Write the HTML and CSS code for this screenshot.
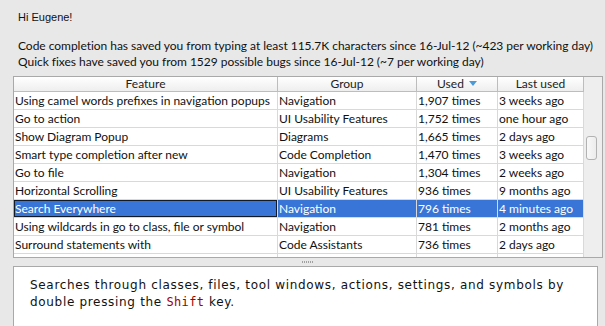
FILE: index.html
```html
<!DOCTYPE html>
<html>
<head>
<meta charset="utf-8">
<link rel="stylesheet" href="styles.css">
</head>
<body>
<div class="page">
  <p class="greeting">Hi Eugene!</p>
  <div class="stats">
    <p>Code completion has saved you from typing at least 115.7K characters since 16-Jul-12 (~423 per working day)</p>
    <p>Quick fixes have saved you from 1529 possible bugs since 16-Jul-12 (~7 per working day)</p>
  </div>
  <div class="table">
    <div class="grid">
      <div class="row head">
        <div class="cell">Feature</div>
        <div class="cell">Group</div>
        <div class="cell">Used <span class="sort"></span></div>
        <div class="cell">Last used</div>
      </div>
      <div class="row"><div class="cell">Using camel words prefixes in navigation popups</div><div class="cell">Navigation</div><div class="cell">1,907 times</div><div class="cell">3 weeks ago</div></div>
      <div class="row"><div class="cell">Go to action</div><div class="cell">UI Usability Features</div><div class="cell">1,752 times</div><div class="cell">one hour ago</div></div>
      <div class="row"><div class="cell">Show Diagram Popup</div><div class="cell">Diagrams</div><div class="cell">1,665 times</div><div class="cell">2 days ago</div></div>
      <div class="row"><div class="cell">Smart type completion after new</div><div class="cell">Code Completion</div><div class="cell">1,470 times</div><div class="cell">3 weeks ago</div></div>
      <div class="row"><div class="cell">Go to file</div><div class="cell">Navigation</div><div class="cell">1,304 times</div><div class="cell">2 weeks ago</div></div>
      <div class="row"><div class="cell">Horizontal Scrolling</div><div class="cell">UI Usability Features</div><div class="cell">936 times</div><div class="cell">9 months ago</div></div>
      <div class="row selected"><div class="cell focus">Search Everywhere</div><div class="cell">Navigation</div><div class="cell">796 times</div><div class="cell">4 minutes ago</div></div>
      <div class="row"><div class="cell">Using wildcards in go to class, file or symbol</div><div class="cell">Navigation</div><div class="cell">781 times</div><div class="cell">2 months ago</div></div>
      <div class="row"><div class="cell">Surround statements with</div><div class="cell">Code Assistants</div><div class="cell">736 times</div><div class="cell">2 days ago</div></div>
      <div class="row"><div class="cell"></div><div class="cell"></div><div class="cell"></div><div class="cell"></div></div>
    </div>
    <div class="scrollbar"><div class="thumb"></div></div>
  </div>
  <div class="splitter"><span class="grip"></span></div>
  <div class="tip">
    <p>Searches through classes, files, tool windows, actions, settings, and symbols by double pressing the <span class="key">Shift</span> key.</p>
  </div>
</div>
</body>
</html>
```

FILE: styles.css
```css
html, body {
  margin: 0;
  padding: 0;
  background: #e8e8e8;
  overflow: hidden;
}
.page {
  width: 605px;
  height: 326px;
  padding: 0 0 0 13px;
  box-sizing: border-box;
  overflow: hidden;
}
p { margin: 0; }
.greeting {
  font-family: "Liberation Sans", Arial, sans-serif;
  font-size: 11px;
  line-height: 14px;
  color: #111;
  padding: 10px 0 0 5px;
}
.stats {
  font-family: Lato, "Open Sans", sans-serif;
  font-size: 12px;
  letter-spacing: -0.03px;
  line-height: 16px;
  color: #111;
  padding: 14px 0 0 5px;
}
.table {
  margin-top: 6px;
  width: 590px;
  height: 182px;
  box-sizing: border-box;
  border: 1px solid #a9a9a9;
  display: flex;
  background: #fff;
  overflow: hidden;
}
.grid {
  width: 570px;
  flex: none;
}
.row {
  display: grid;
  grid-template-columns: 264px 139px 81px 86px;
  height: 18px;
  font-family: Lato, "Open Sans", sans-serif;
  font-size: 12px;
  line-height: 17px;
  color: #111;
}
.cell {
  border-right: 1px solid #d9d9d9;
  border-bottom: 1px solid #d9d9d9;
  padding-left: 1px;
  white-space: nowrap;
  overflow: hidden;
}
.head {
  height: 15px;
  line-height: 14px;
  background: linear-gradient(#ffffff, #ededed);
}
.head .cell {
  text-align: center;
  border-right-color: #bdbdbd;
  border-bottom-color: #bdbdbd;
  padding-left: 0;
  color: #222;
}
.sort {
  display: inline-block;
  width: 0;
  height: 0;
  border-left: 4px solid transparent;
  border-right: 4px solid transparent;
  border-top: 5px solid #4a9ad8;
  vertical-align: 2px;
  margin-left: 2px;
}
.selected .cell {
  background: #3875d6;
  color: #fff;
}
.selected .focus {
  box-shadow: inset 0 0 0 1px #121a28;
}
.scrollbar {
  flex: 1;
  background: #eeeeee;
  position: relative;
}
.thumb {
  position: absolute;
  left: 2px;
  top: 59px;
  width: 9px;
  height: 22px;
  border: 1px solid #b2b2b2;
  border-radius: 3px;
  background: linear-gradient(90deg, #f8f8f8, #ececec);
}
.splitter {
  height: 8px;
  width: 590px;
  display: flex;
  justify-content: center;
  align-items: center;
}
.grip {
  width: 12px;
  height: 2px;
  background: repeating-linear-gradient(90deg, #a0a0a0 0 1px, transparent 1px 2px);
}
.tip {
  width: 585px;
  height: 70px;
  box-sizing: border-box;
  border: 1px solid #a9a9a9;
  background: #fff;
  padding: 10px 10px 0 16px;
}
.tip p {
  font-family: "DejaVu Sans", Verdana, sans-serif;
  font-size: 12px;
  letter-spacing: 0.68px;
  line-height: 17px;
  color: #111;
}
.key {
  font-family: "DejaVu Sans Mono", monospace;
  letter-spacing: 0.4px;
  color: #a00000;
}
```
